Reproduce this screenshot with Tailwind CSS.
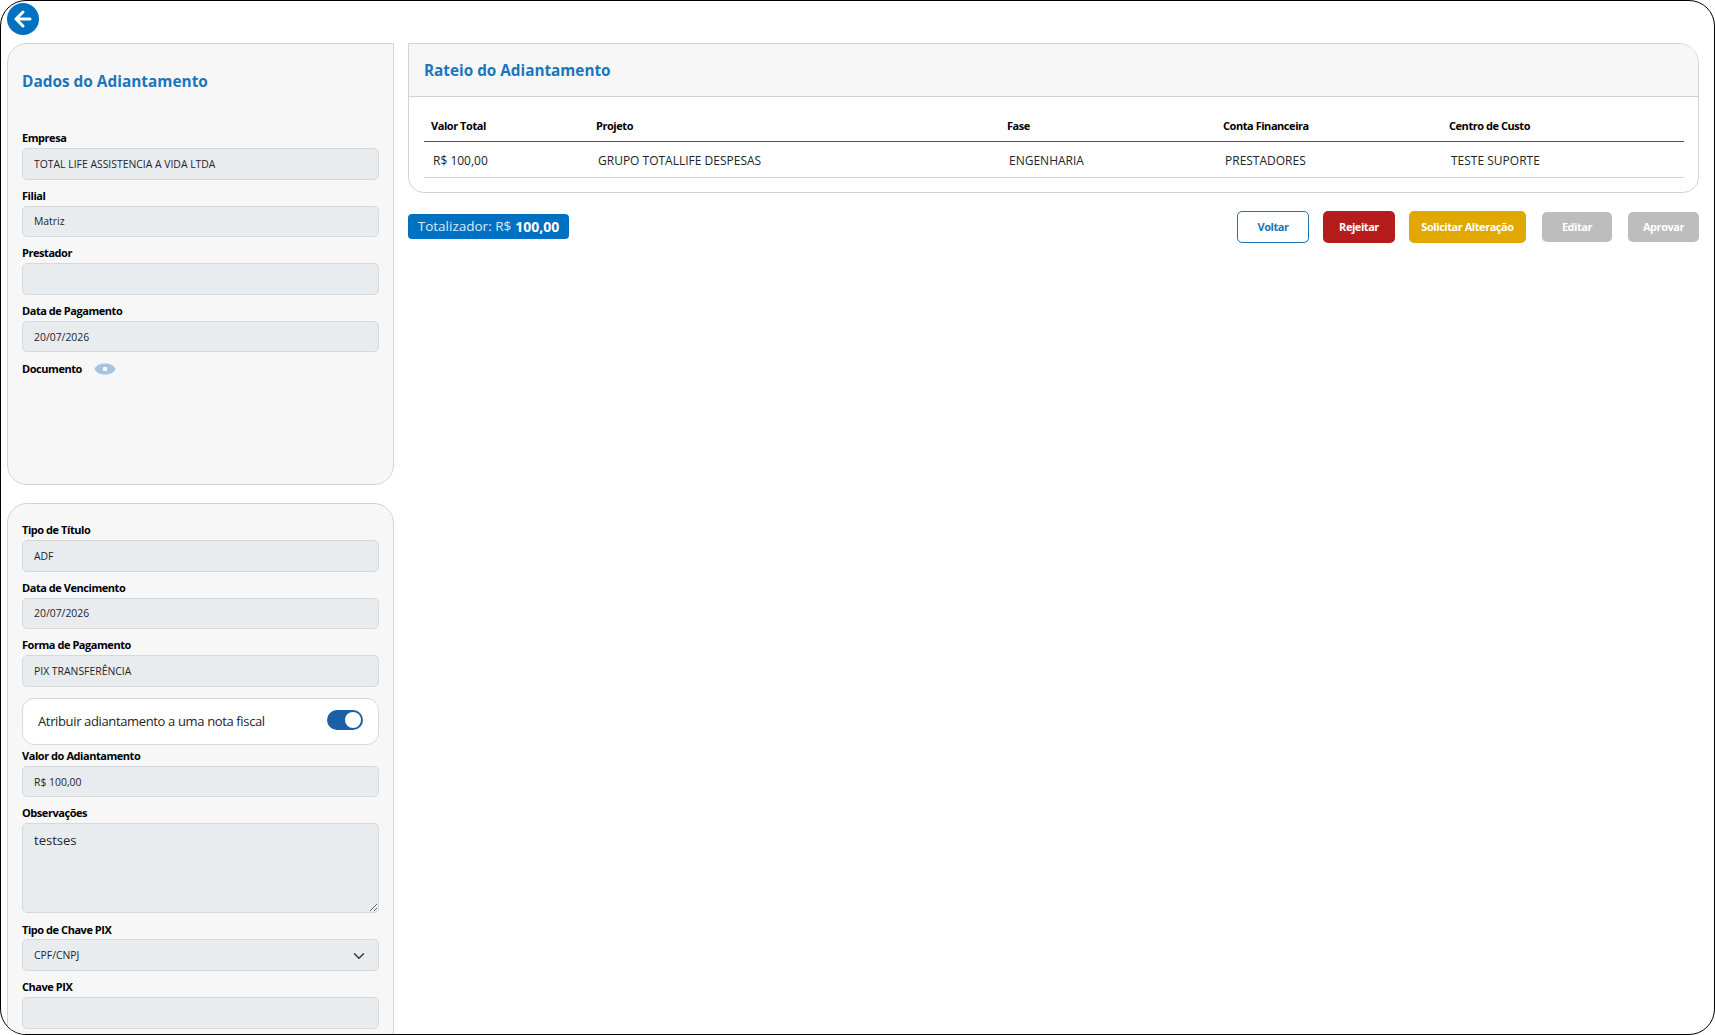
<!DOCTYPE html>
<html lang="pt-BR">
<head>
    <meta charset="UTF-8">
    <meta name="viewport" content="width=device-width, initial-scale=1.0">
    <title>Dados do Adiantamento</title>
    <script src="https://cdn.jsdelivr.net/npm/@tailwindcss/browser@4"></script>
</head>
<body class="bg-white font-['Open_Sans',sans-serif]">
    <div class="w-[1715px] h-[1035px] overflow-hidden rounded-[26px] border border-black bg-white px-[6px] text-[#212529]">
        <!-- Back button -->
        <div class="h-[42px] pt-[2px]">
            <button class="flex items-center justify-center w-[32px] h-[32px] rounded-full bg-[#0070c0]">
                <svg width="20" height="20" viewBox="0 0 20 20" fill="none" stroke="white" stroke-width="3" stroke-linecap="round" stroke-linejoin="round"><path d="M17 10H3M10 3l-7 7 7 7"/></svg>
            </button>
        </div>

        <div class="flex gap-[14px] items-start">
            <!-- Left column -->
            <div class="w-[387px] shrink-0">
                <section class="h-[442px] rounded-tl-[20px] rounded-b-[20px] border border-[#d4d4d4] bg-[#f7f7f7] px-[14px] pt-[27px]">
                    <h2 class="h-[22px] leading-[22px] text-[15.4px] font-bold text-[#1a75bb] mb-[36px]">Dados do Adiantamento</h2>
                    <div>
                        <label class="block h-[18px] leading-[18px] mb-px text-[11px] tracking-[-0.45px] font-bold text-black">Empresa</label>
                        <input readonly value="TOTAL LIFE ASSISTENCIA A VIDA LTDA" class="w-full h-[31.6px] px-[11px] text-[10.4px] rounded-[5px] border border-[#d6d9dc] bg-[#e9ecef] text-[#212529]">
                    </div>
                    <div class="mt-[7px]">
                        <label class="block h-[18px] leading-[18px] mb-px text-[11px] tracking-[-0.45px] font-bold text-black">Filial</label>
                        <input readonly value="Matriz" class="w-full h-[31.6px] px-[11px] text-[10.4px] rounded-[5px] border border-[#d6d9dc] bg-[#e9ecef] text-[#212529]">
                    </div>
                    <div class="mt-[7px]">
                        <label class="block h-[18px] leading-[18px] mb-px text-[11px] tracking-[-0.45px] font-bold text-black">Prestador</label>
                        <input readonly value="" class="w-full h-[31.6px] px-[11px] text-[10.4px] rounded-[5px] border border-[#d6d9dc] bg-[#e9ecef] text-[#212529]">
                    </div>
                    <div class="mt-[7px]">
                        <label class="block h-[18px] leading-[18px] mb-px text-[11px] tracking-[-0.45px] font-bold text-black">Data de Pagamento</label>
                        <input readonly value="20/07/2026" class="w-full h-[31.6px] px-[11px] text-[10.4px] rounded-[5px] border border-[#d6d9dc] bg-[#e9ecef] text-[#212529]">
                    </div>
                    <div class="mt-[8px] flex items-center gap-[12px] h-[18px]">
                        <span class="text-[11px] tracking-[-0.45px] font-bold text-black">Documento</span>
                        <svg width="22" height="12" viewBox="0 0 22 12"><path d="M0.5 6C2.5 2 6 0.5 11 0.5S19.500 2 21.500 6C19.500 10 16 11.500 11 11.500S2.500 10 0.500 6Z" fill="#a3c5e2"/><circle cx="11" cy="6" r="2.300" fill="white"/></svg>
                    </div>
                </section>

                <section class="mt-[18px] h-[600px] rounded-t-[20px] border border-[#d4d4d4] bg-[#f7f7f7] px-[14px] pt-[17px]">
                    <div>
                        <label class="block h-[18px] leading-[18px] mb-px text-[11px] tracking-[-0.45px] font-bold text-black">Tipo de Título</label>
                        <input readonly value="ADF" class="w-full h-[31.6px] px-[11px] text-[10.4px] rounded-[5px] border border-[#d6d9dc] bg-[#e9ecef] text-[#212529]">
                    </div>
                    <div class="mt-[7px]">
                        <label class="block h-[18px] leading-[18px] mb-px text-[11px] tracking-[-0.45px] font-bold text-black">Data de Vencimento</label>
                        <input readonly value="20/07/2026" class="w-full h-[31.6px] px-[11px] text-[10.4px] rounded-[5px] border border-[#d6d9dc] bg-[#e9ecef] text-[#212529]">
                    </div>
                    <div class="mt-[7px]">
                        <label class="block h-[18px] leading-[18px] mb-px text-[11px] tracking-[-0.45px] font-bold text-black">Forma de Pagamento</label>
                        <input readonly value="PIX TRANSFERÊNCIA" class="w-full h-[31.6px] px-[11px] text-[10.4px] rounded-[5px] border border-[#d6d9dc] bg-[#e9ecef] text-[#212529]">
                    </div>
                    <div class="mt-[11px] h-[47px] flex items-center justify-between rounded-[12px] border border-[#d6d9dc] bg-white pl-[15px] pr-[15px]">
                        <span class="text-[13px] tracking-[-0.36px] text-[#212529]">Atribuir adiantamento a uma nota fiscal</span>
                        <span class="flex items-center justify-end w-[36px] h-[20px] rounded-full bg-[#1a5fa8] pr-[2px] mb-[2px]">
                            <span class="block w-[16px] h-[16px] rounded-full bg-white"></span>
                        </span>
                    </div>
                    <div class="mt-[2px]">
                        <label class="block h-[18px] leading-[18px] mb-px text-[11px] tracking-[-0.45px] font-bold text-black">Valor do Adiantamento</label>
                        <input readonly value="R$ 100,00" class="w-full h-[31.6px] px-[11px] text-[10.4px] rounded-[5px] border border-[#d6d9dc] bg-[#e9ecef] text-[#212529]">
                    </div>
                    <div class="mt-[7px]">
                        <label class="block h-[18px] leading-[18px] mb-px text-[11px] tracking-[-0.45px] font-bold text-black">Observações</label>
                        <textarea readonly class="block w-full h-[90px] px-[11px] py-[7px] text-[13px] rounded-[5px] border border-[#d6d9dc] bg-[#e9ecef] text-[#212529]">testses</textarea>
                    </div>
                    <div class="mt-[8px]">
                        <label class="block h-[18px] leading-[18px] text-[11px] tracking-[-0.45px] font-bold text-black">Tipo de Chave PIX</label>
                        <div class="flex items-center justify-between h-[31.6px] pl-[11px] pr-[13px] pt-px text-[10.4px] rounded-[5px] border border-[#d6d9dc] bg-[#e9ecef] text-[#212529]">
                            <span>CPF/CNPJ</span>
                            <svg width="12" height="12" viewBox="0 0 16 16" fill="none" stroke="#343a40" stroke-width="2" stroke-linecap="round" stroke-linejoin="round"><path d="M2 5l6 6 6-6"/></svg>
                        </div>
                    </div>
                    <div class="mt-[7px]">
                        <label class="block h-[18px] leading-[18px] mb-px text-[11px] tracking-[-0.45px] font-bold text-black">Chave PIX</label>
                        <input readonly value="" class="w-full h-[31.6px] px-[11px] text-[10.4px] rounded-[5px] border border-[#d6d9dc] bg-[#e9ecef] text-[#212529]">
                    </div>
                </section>
            </div>

            <!-- Right column -->
            <div class="w-[1291px] shrink-0">
                <section class="h-[150px] rounded-tr-[20px] rounded-b-[16px] border border-[#d4d4d4] overflow-hidden">
                    <div class="h-[53px] flex items-center px-[15px] pt-px border-b border-[#d4d4d4] bg-[#f7f7f7]">
                        <h2 class="text-[15.3px] font-bold text-[#1a75bb]">Rateio do Adiantamento</h2>
                    </div>
                    <div class="px-[15px]">
                        <table class="w-[1260px] table-fixed text-left">
                            <thead>
                                <tr class="border-b border-[#1a5fa8] h-[44px] text-[11px] tracking-[-0.45px] font-bold text-black">
                                    <th class="w-[165px] px-[7px] pt-[14px]">Valor Total</th>
                                    <th class="w-[411px] px-[7px] pt-[14px]">Projeto</th>
                                    <th class="w-[216px] px-[7px] pt-[14px]">Fase</th>
                                    <th class="w-[226px] px-[7px] pt-[14px]">Conta Financeira</th>
                                    <th class="px-[7px] pt-[14px]">Centro de Custo</th>
                                </tr>
                            </thead>
                            <tbody>
                                <tr class="border-b border-[#d4d4d4] h-[36px] text-[12px] text-[#212529]">
                                    <td class="px-[9px] pt-[3px]">R$ 100,00</td>
                                    <td class="px-[9px] pt-[3px]">GRUPO TOTALLIFE DESPESAS</td>
                                    <td class="px-[9px] pt-[3px]">ENGENHARIA</td>
                                    <td class="px-[9px] pt-[3px]">PRESTADORES</td>
                                    <td class="px-[9px] pt-[3px]">TESTE SUPORTE</td>
                                </tr>
                            </tbody>
                        </table>
                    </div>
                </section>

                <div class="mt-[18px] flex items-center justify-between">
                    <div class="mb-[2px] h-[25px] w-[161px] flex items-center justify-center rounded-[4px] bg-[#0070c0] text-[13.5px] text-white/85 gap-[4px]">Totalizador: R$ <b class="text-white text-[14px]">100,00</b></div>
                    <div class="flex items-center text-[11px] tracking-[-0.45px] font-bold">
                        <button class="w-[72px] h-[32px] rounded-[5px] border border-[#1a75bb] bg-white text-[#1a75bb]">Voltar</button>
                        <button class="ml-[14px] w-[72px] h-[32px] rounded-[5px] bg-[#b71c1c] text-white">Rejeitar</button>
                        <button class="ml-[14px] w-[117px] h-[32px] rounded-[5px] bg-[#e0a800] text-white">Solicitar Alteração</button>
                        <button class="ml-[16px] w-[70px] h-[30px] rounded-[5px] bg-[#bdbdbd] text-white">Editar</button>
                        <button class="ml-[16px] w-[71px] h-[30px] rounded-[5px] bg-[#bdbdbd] text-white">Aprovar</button>
                    </div>
                </div>
            </div>
        </div>
    </div>
</body>
</html>
